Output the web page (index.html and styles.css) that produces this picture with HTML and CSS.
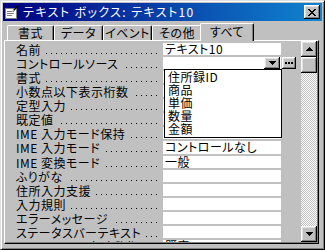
FILE: index.html
```html
<!DOCTYPE html>
<html lang="ja">
<head>
<meta charset="utf-8">
<title>テキスト ボックス: テキスト10</title>
<link rel="stylesheet" href="styles.css">
</head>
<body>
<div class="window">
	<div class="titlebar">
		<svg class="app-icon" width="16" height="16" viewBox="0 0 16 16">
			<rect x="1.5" y="4.5" width="11" height="10" fill="#fff" stroke="#808080"/>
			<path d="M3 7h7v1H3zM3 9h7v1H3zM3 11h5v1H3z" fill="#808080"/>
			<path d="M9 6l5-5 1 1-5 5z" fill="#000"/>
			<path d="M8 7l1-1 1 1-2 1z" fill="#c0c0c0"/>
		</svg>
		<span class="title">テキスト ボックス: テキスト10</span>
		<button class="close" title="閉じる">
			<svg width="8" height="7" viewBox="0 0 8 7"><path d="M0 0h2v1H0zM6 0h2v1H6zM1 1h2v1H1zM5 1h2v1H5zM2 2h4v1H2zM3 3h2v1H3zM2 4h4v1H2zM1 5h2v1H1zM5 5h2v1H5zM0 6h2v1H0zM6 6h2v1H6z"/></svg>
		</button>
	</div>
	<div class="tabs">
		<span class="tab tab-format">書式</span>
		<span class="tab tab-data">データ</span>
		<span class="tab tab-event">イベント</span>
		<span class="tab tab-other">その他</span>
		<span class="tab tab-all selected">すべて</span>
	</div>
	<div class="page">
		<ul class="props">
			<li><span class="label"><span>名前</span></span><span class="value">テキスト10</span></li>
			<li>
				<span class="label"><span>コントロールソース</span></span>
				<span class="value combo"><span class="combo-text"></span><span class="btn drop-btn"><svg width="7" height="4" viewBox="0 0 7 4"><path d="M0 0h7v1h-1v1h-1v1h-1v1h-1v-1h-1v-1h-1v-1h-1z"/></svg></span></span>
				<span class="btn build-btn"><svg width="8" height="2" viewBox="0 0 8 2"><path d="M0 0h2v2H0zM3 0h2v2H3zM6 0h2v2H6z"/></svg></span>
			</li>
			<li><span class="label"><span>書式</span></span><span class="value"></span></li>
			<li><span class="label"><span>小数点以下表示桁数</span></span><span class="value"></span></li>
			<li><span class="label"><span>定型入力</span></span><span class="value"></span></li>
			<li><span class="label"><span>既定値</span></span><span class="value"></span></li>
			<li><span class="label"><span>IME 入力モード保持</span></span><span class="value">いいえ</span></li>
			<li><span class="label"><span>IME 入力モード</span></span><span class="value">コントロールなし</span></li>
			<li><span class="label"><span>IME 変換モード</span></span><span class="value">一般</span></li>
			<li><span class="label"><span>ふりがな</span></span><span class="value"></span></li>
			<li><span class="label"><span>住所入力支援</span></span><span class="value"></span></li>
			<li><span class="label"><span>入力規則</span></span><span class="value"></span></li>
			<li><span class="label"><span>エラーメッセージ</span></span><span class="value"></span></li>
			<li><span class="label"><span>ステータスバーテキスト</span></span><span class="value"></span></li>
			<li><span class="label"><span>Enter キー入力時動作</span></span><span class="value">既定</span></li>
		</ul>
		<div class="scrollbar">
			<span class="btn sb-btn"><svg width="7" height="4" viewBox="0 0 7 4"><path d="M3 0h1v1h1v1h1v1h1v1H0V3h1V2h1V1h1z"/></svg></span>
			<span class="btn sb-thumb"></span>
			<span class="sb-track"></span>
			<span class="btn sb-btn"><svg width="7" height="4" viewBox="0 0 7 4"><path d="M0 0h7v1h-1v1h-1v1h-1v1h-1v-1h-1v-1h-1v-1h-1z"/></svg></span>
		</div>
		<ul class="dropdown">
			<li>住所録ID</li>
			<li>商品</li>
			<li>単価</li>
			<li>数量</li>
			<li>金額</li>
		</ul>
	</div>
</div>
</body>
</html>
```

FILE: styles.css
```css
*{
	box-sizing: border-box;
}
html, body{
	margin: 0;
	padding: 0;
}
body{
	font-family: "Noto Sans CJK JP", "Noto Sans", sans-serif;
	font-size: 12px;
	font-feature-settings: "palt";
	letter-spacing: .5px;
	color: #000;
	background: #c0c0c0;
}
.window{
	width: 325px;
	height: 250px;
	padding: 2px;
	display: flex;
	flex-direction: column;
	background: #c0c0c0;
	border: 1px solid;
	border-color: #dfdfdf #000 #000 #dfdfdf;
	box-shadow: inset 1px 1px #fff, inset -1px -1px #808080;
}

/* title bar */
.titlebar{
	flex: none;
	height: 18px;
	display: flex;
	align-items: center;
	padding-left: 1px;
	color: #fff;
	background: linear-gradient(to right, #000080, #1084d0);
}
.app-icon{
	flex: none;
	margin-right: 3px;
}
.title{
	flex: 1;
	line-height: 18px;
	letter-spacing: 1.4px;
	white-space: nowrap;
}
.close{
	flex: none;
	width: 16px;
	height: 14px;
	margin-right: 2px;
	padding: 0;
	border: 0;
	display: flex;
	align-items: center;
	justify-content: center;
	background: #c0c0c0;
	box-shadow: inset -1px -1px #000, inset 1px 1px #fff, inset -2px -2px #808080, inset 2px 2px #dfdfdf;
}

/* tabs */
.tabs{
	flex: none;
	height: 19px;
	display: flex;
	align-items: flex-end;
	padding-left: 4px;
}
.tab{
	height: 15px;
	line-height: 14px;
	text-align: center;
	white-space: nowrap;
	border: 1px solid;
	border-bottom: 0;
	border-color: #fff #000 #fff #fff;
	border-radius: 2px 2px 0 0;
	box-shadow: inset -1px 0 #808080;
}
.tab-format{ width: 47px; }
.tab-data{ width: 49px; }
.tab-event{ width: 49px; }
.tab-other{ width: 50px; }
.tab.selected{
	position: relative;
	z-index: 1;
	width: 54px;
	height: 18px;
	line-height: 15px;
	margin: 0 0 -1px -2px;
	background: #c0c0c0;
}

/* property page */
.page{
	flex: none;
	height: 204px;
	margin: 0 3px 3px 1px;
	padding: 0 1px 1px 0;
	display: flex;
	position: relative;
	overflow: hidden;
	border: 1px solid;
	border-color: #fff #000 #000 #fff;
	box-shadow: inset -1px -1px #808080;
}
.props{
	flex: 1;
	margin: 0;
	padding: 1.5px 0 0;
	list-style: none;
	overflow: hidden;
}
.props li{
	height: 14.15px;
	display: flex;
}
.label{
	flex: none;
	width: 158px;
	padding: 0 4px 0 11px;
	line-height: 14px;
	white-space: nowrap;
	background-image: linear-gradient(to right, #000 1px, transparent 1px);
	background-size: 5px 1px;
	background-repeat: repeat-x;
	background-origin: content-box;
	background-clip: content-box;
	background-position: 0 10px;
}
.label span{
	display: inline-block;
	height: 14px;
	padding-right: 4px;
	background: #c0c0c0;
}
.value{
	flex: none;
	width: 118px;
	height: 12.15px;
	padding-left: 2px;
	line-height: 12px;
	white-space: nowrap;
	background: #fff;
}
.value.combo{
	display: flex;
	padding-left: 0;
}
.combo-text{
	flex: 1;
}

.btn{
	display: flex;
	align-items: center;
	justify-content: center;
	background: #c0c0c0;
	box-shadow: inset -1px -1px #000, inset 1px 1px #fff, inset -2px -2px #808080, inset 2px 2px #dfdfdf;
}
.drop-btn{
	flex: none;
	width: 16px;
	height: 12px;
	margin-right: 1px;
}
.build-btn{
	flex: none;
	width: 14px;
	height: 12px;
	margin-left: 1px;
}

/* scrollbar */
.scrollbar{
	flex: none;
	width: 16px;
	display: flex;
	flex-direction: column;
}
.sb-btn, .sb-thumb{
	flex: none;
	height: 16px;
}
.sb-track{
	flex: 1;
	background: conic-gradient(#fff 25%, #c0c0c0 0 50%, #fff 0 75%, #c0c0c0 0);
	background-size: 2px 2px;
}

/* open combo list */
.dropdown{
	position: absolute;
	left: 159px;
	top: 28px;
	width: 118px;
	height: 69px;
	margin: 0;
	padding: 0 0 0 3px;
	list-style: none;
	z-index: 2;
	background: #fff;
	border: 1px solid #000;
}
.dropdown li{
	height: 13px;
	line-height: 13px;
}
```
